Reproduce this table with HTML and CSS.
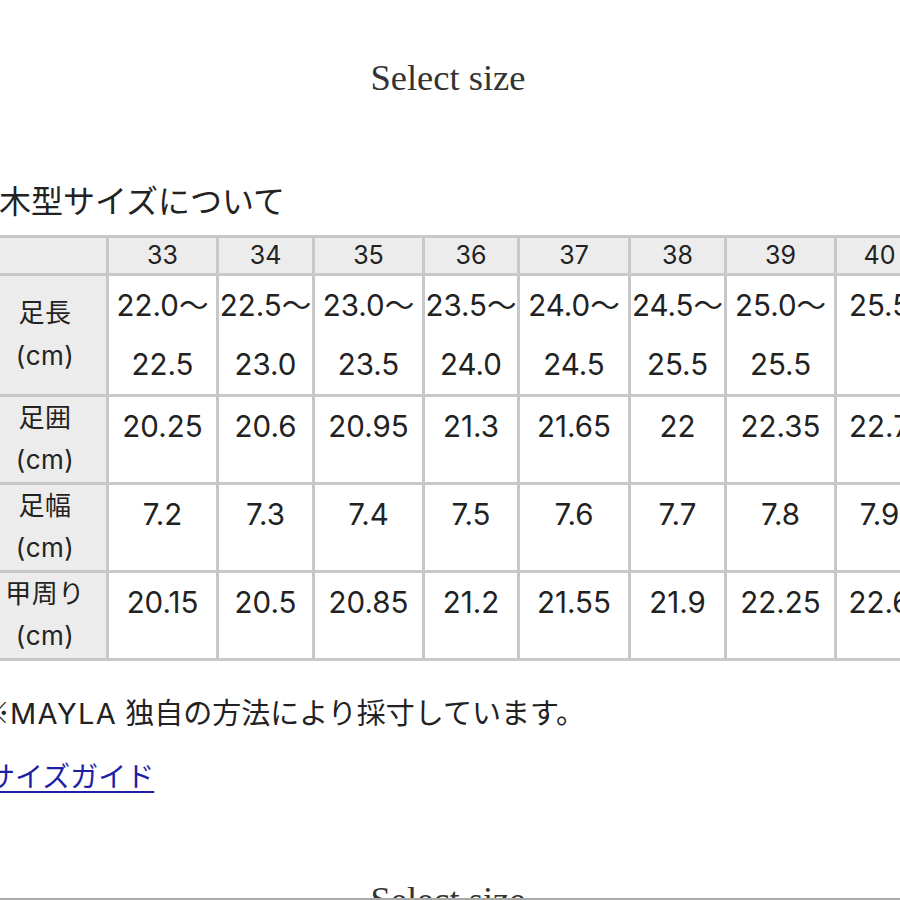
FILE: index.html
```html
<!DOCTYPE html>
<html lang="ja">
<head>
<meta charset="utf-8">
<title>Select size</title>
<link rel="stylesheet" href="styles.css">
</head>
<body>
<div class="page">
  <div class="select-size">Select size</div>
  <h2 class="title">木型サイズについて</h2>
  <table class="size-table">
    <colgroup>
      <col class="c-label">
      <col class="c-wide"><col class="c-narrow"><col class="c-wide"><col class="c-narrow2">
      <col class="c-wide2"><col class="c-narrow"><col class="c-wide"><col class="c-last">
    </colgroup>
    <thead>
      <tr>
        <th class="corner"></th>
        <th>33</th><th>34</th><th>35</th><th>36</th><th>37</th><th>38</th><th>39</th><th>40</th>
      </tr>
    </thead>
    <tbody>
      <tr class="row-tall">
        <th class="label">足長<br>(cm)</th>
        <td>22.0～<br>22.5</td>
        <td>22.5～<br>23.0</td>
        <td>23.0～<br>23.5</td>
        <td>23.5～<br>24.0</td>
        <td>24.0～<br>24.5</td>
        <td>24.5～<br>25.5</td>
        <td>25.0～<br>25.5</td>
        <td>25.5</td>
      </tr>
      <tr>
        <th class="label">足囲<br>(cm)</th>
        <td>20.25</td><td>20.6</td><td>20.95</td><td>21.3</td><td>21.65</td><td>22</td><td>22.35</td><td>22.7</td>
      </tr>
      <tr>
        <th class="label">足幅<br>(cm)</th>
        <td>7.2</td><td>7.3</td><td>7.4</td><td>7.5</td><td>7.6</td><td>7.7</td><td>7.8</td><td>7.9</td>
      </tr>
      <tr>
        <th class="label">甲周り<br>(cm)</th>
        <td>20.15</td><td>20.5</td><td>20.85</td><td>21.2</td><td>21.55</td><td>21.9</td><td>22.25</td><td>22.6</td>
      </tr>
    </tbody>
  </table>
  <p class="note"><span class="mark">※</span><span class="brand">MAYLA</span> 独自の方法により採寸しています。</p>
  <p class="guide"><a href="#">サイズガイド</a></p>
  <div class="select-size select-size--next">Select size</div>
</div>
</body>
</html>
```
FILE: styles.css
```css
html, body {
  margin: 0;
  padding: 0;
  background: #ffffff;
}

body {
  overflow: hidden;
  height: 900px;
  font-family: Inter, "Noto Sans CJK JP", sans-serif;
  color: #222222;
}

body::after {
  content: "";
  position: fixed;
  left: 0;
  right: 0;
  bottom: 0;
  height: 2px;
  background: #a9a9a9;
}

.page {
  margin-left: -19px;
  width: 934px;
}

.select-size {
  font-family: "Liberation Serif", serif;
  font-size: 36.5px;
  line-height: 44px;
  text-align: center;
  color: #333333;
  padding-top: 56px;
}

.select-size--next {
  padding-top: 0;
  margin-top: 81px;
}

.title {
  margin: 76px 0 0 0;
  padding-left: 18px;
  font-family: "Noto Sans CJK JP", sans-serif;
  font-weight: 400;
  font-size: 32px;
  line-height: 46px;
  color: #222222;
}

.size-table {
  margin-top: 13px;
  border-collapse: separate;
  border-spacing: 0;
  table-layout: fixed;
  width: 944px;
  border-top: 3px solid #c8c8c8;
  border-left: 3px solid #c8c8c8;
}

.c-label { width: 125px; }
.c-wide { width: 110px; }
.c-wide2 { width: 111px; }
.c-narrow { width: 96px; }
.c-narrow2 { width: 95px; }
.c-last { width: 88px; }

.size-table th,
.size-table td {
  box-sizing: border-box;
  padding: 0;
  border-right: 3px solid #c8c8c8;
  border-bottom: 3px solid #c8c8c8;
  text-align: center;
  font-weight: 400;
  color: #222222;
  white-space: nowrap;
}

.size-table thead th {
  background: #ececec;
  font-size: 25px;
  line-height: 35px;
  vertical-align: middle;
}

.size-table .label {
  background: #ececec;
  font-size: 26px;
  line-height: 42.5px;
  letter-spacing: 0.5px;
  vertical-align: middle;
}

.size-table td {
  background: #ffffff;
  font-size: 29.5px;
  line-height: 58.75px;
  vertical-align: top;
}

.note {
  margin: 30px 0 0 0;
  font-size: 29px;
  line-height: 40px;
  color: #222222;
}

.mark {
  font-family: "Noto Sans CJK JP", sans-serif;
}

.brand {
  letter-spacing: 1.4px;
}

.guide {
  margin: 23px 0 0 6px;
  font-size: 28px;
  line-height: 40px;
}

.guide a {
  color: #1f1fa6;
  text-decoration: underline;
  text-underline-offset: 4px;
}
```
